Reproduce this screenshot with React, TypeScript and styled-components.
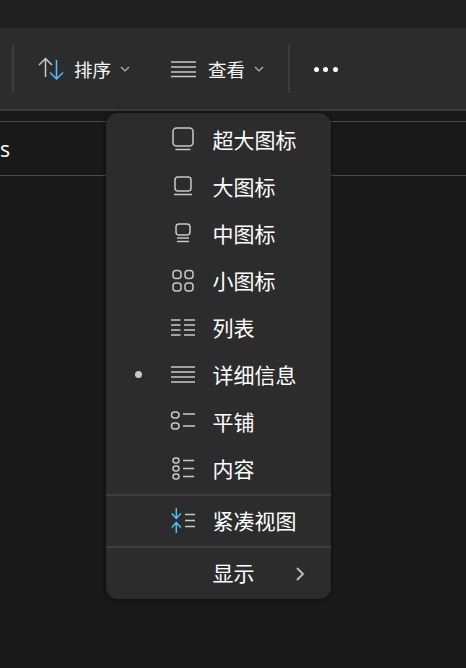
import { ReactNode } from "react";
import styled, { createGlobalStyle } from "styled-components";

const Global = createGlobalStyle`
  html, body {
    margin: 0;
    padding: 0;
    background: #191919;
  }
  body {
    font-family: "Noto Sans CJK SC", "Noto Sans", sans-serif;
    color: #fff;
    overflow: hidden;
  }
`;

const Page = styled.div`
  position: relative;
  width: 466px;
  height: 668px;
  background: #191919;
  overflow: hidden;
`;

const TitleStrip = styled.div`
  height: 28px;
  background: #202020;
`;

const Toolbar = styled.div`
  height: 81px;
  display: flex;
  align-items: center;
  background: #2c2c2c;
  border-bottom: 2px solid #3b3b3b;
  padding-left: 12px;
`;

const Separator = styled.div`
  width: 2px;
  height: 48px;
  background: #3d3d3d;
`;

const ToolButton = styled.div<{ $width: number }>`
  width: ${(p) => p.$width}px;
  height: 48px;
  display: flex;
  align-items: center;
  font-size: 18.5px;
  color: #f5f5f5;
`;

const ToolIcon = styled.span<{ $left: number; $right: number }>`
  display: flex;
  margin-left: ${(p) => p.$left}px;
  margin-right: ${(p) => p.$right}px;
`;

const Caret = styled.span`
  display: flex;
  margin-left: 9px;
`;

const Dots = styled.div`
  display: flex;
  gap: 4.3px;
  margin-left: 24px;
  margin-top: 2px;
`;

const Dot = styled.span`
  width: 5px;
  height: 5px;
  border-radius: 50%;
  background: #fff;
`;

const HeaderRow = styled.div`
  margin-top: 10px;
  height: 53px;
  border-top: 1px solid #4a4a4a;
  border-bottom: 1px solid #4a4a4a;
  display: flex;
  align-items: center;
  font-family: "Open Sans", sans-serif;
  font-size: 21px;
  font-weight: 500;
  color: #fff;
`;

const Menu = styled.div`
  position: absolute;
  left: 106px;
  top: 113px;
  width: 225px;
  height: 486px;
  box-sizing: border-box;
  padding-top: 4px;
  background: #2c2c2c;
  border-radius: 12px;
  box-shadow: 0 0 4px rgba(0, 0, 0, 0.6);
`;

const MenuRow = styled.div`
  height: 47px;
  display: grid;
  grid-template-columns: 64px 40px 1fr 32px;
  align-items: center;
  font-size: 21px;
  line-height: 1;
  color: #fff;
`;

const MenuDivider = styled.div`
  height: 2px;
  background: #3d3d3d;
  margin-top: 1px;
  margin-bottom: 2px;
`;

const Bullet = styled.span`
  width: 7px;
  height: 7px;
  border-radius: 50%;
  background: #c9c9c9;
  justify-self: center;
  margin-bottom: 2px;
`;

const IconSlot = styled.span`
  display: flex;
  justify-content: center;
  margin-left: -7px;
  margin-right: 7px;
  margin-bottom: 2px;
`;

const Label = styled.span`
  margin-left: 2.5px;
  padding-bottom: 2px;
`;

const Chevron = styled.span`
  display: flex;
  margin-left: -5px;
`;

const Ico = ({ children, size = 26, stroke = "#c8c8c8", width = 1.5 }: { children: ReactNode; size?: number; stroke?: string; width?: number }) => (
  <svg width={size} height={size} viewBox="0 0 26 26" fill="none" stroke={stroke} strokeWidth={width}>
    {children}
  </svg>
);

const lines = (x1: number, x2: number, ys: number[], key: string) =>
  ys.map((y) => <line key={key + y} x1={x1} x2={x2} y1={y} y2={y} />);

const rows: { label: string; icon: ReactNode; active?: boolean }[] = [
  {
    label: "超大图标",
    icon: (
      <Ico>
        <rect x="3" y="1" width="20" height="18" rx="3.5" />
        <line x1="5.5" x2="20.5" y1="22.5" y2="22.5" />
      </Ico>
    ),
  },
  {
    label: "大图标",
    icon: (
      <Ico>
        <rect x="5" y="3" width="16" height="14" rx="3" />
        <line x1="4" x2="22" y1="20.5" y2="20.5" />
      </Ico>
    ),
  },
  {
    label: "中图标",
    icon: (
      <Ico>
        <rect x="6" y="3" width="14" height="11" rx="3" />
        {lines(7, 19, [17, 20.5], "m")}
      </Ico>
    ),
  },
  {
    label: "小图标",
    icon: (
      <Ico>
        <rect x="3" y="2.5" width="8" height="8" rx="3" />
        <rect x="15" y="2.5" width="8" height="8" rx="3" />
        <rect x="3" y="15" width="8" height="8" rx="3" />
        <rect x="15" y="15" width="8" height="8" rx="3" />
      </Ico>
    ),
  },
  {
    label: "列表",
    icon: <Ico>{[...lines(1, 10.5, [5, 10, 15, 20], "a"), ...lines(14, 25, [5, 10, 15, 20], "b")]}</Ico>,
  },
  {
    label: "详细信息",
    active: true,
    icon: <Ico>{lines(1, 25, [5, 10, 15, 20], "d")}</Ico>,
  },
  {
    label: "平铺",
    icon: (
      <Ico>
        <rect x="1.5" y="3" width="7.5" height="6" rx="3" />
        <rect x="1.5" y="14" width="7.5" height="6" rx="3" />
        {lines(13, 25, [5, 17], "t")}
      </Ico>
    ),
  },
  {
    label: "内容",
    icon: (
      <Ico>
        <rect x="3" y="2" width="6" height="5" rx="2.5" />
        <rect x="3" y="10" width="6" height="5" rx="2.5" />
        <rect x="3" y="18" width="6" height="5" rx="2.5" />
        {lines(13, 24, [4.5, 12.5, 20.5], "c")}
      </Ico>
    ),
  },
];

const App = () => (
  <Page>
    <Global />
    <TitleStrip />
    <Toolbar>
      <Separator />
      <ToolButton $width={157}>
        <ToolIcon $left={24} $right={10}>
          <svg width="26" height="24" viewBox="0 0 26 24" fill="none" strokeWidth="1.5">
            <path d="M1 8 L7.5 1.5 L14 8 M7.5 1.5 V20" stroke="#c8c8c8" />
            <path d="M12 15.5 L18.5 22 L25 15.5 M18.5 22 V3" stroke="#4cc2ff" />
          </svg>
        </ToolIcon>
        排序
        <Caret>
          <svg width="10" height="8" viewBox="0 0 10 8" fill="none" stroke="#b5b5b5" strokeWidth="1.2">
            <path d="M1 2 L5 6 L9 2" />
          </svg>
        </Caret>
      </ToolButton>
      <ToolButton $width={117}>
        <ToolIcon $left={0} $right={12}>
          <svg width="25" height="18" viewBox="0 0 25 18" fill="none" stroke="#c8c8c8" strokeWidth="1.5">
            {lines(0, 25, [2, 7, 12, 16.5], "v")}
          </svg>
        </ToolIcon>
        查看
        <Caret>
          <svg width="10" height="8" viewBox="0 0 10 8" fill="none" stroke="#b5b5b5" strokeWidth="1.2">
            <path d="M1 2 L5 6 L9 2" />
          </svg>
        </Caret>
      </ToolButton>
      <Separator />
      <Dots>
        <Dot />
        <Dot />
        <Dot />
      </Dots>
    </Toolbar>
    <HeaderRow>
      <span>s</span>
    </HeaderRow>
    <Menu>
      {rows.map((r) => (
        <MenuRow key={r.label}>
          {r.active ? <Bullet /> : <span />}
          <IconSlot>{r.icon}</IconSlot>
          <Label>{r.label}</Label>
        </MenuRow>
      ))}
      <MenuDivider />
      <MenuRow>
        <span />
        <IconSlot>
          <Ico>
            <path d="M6.3 0 V10 M1.8 5.5 L6.3 10.5 L10.8 5.5 M6.3 25 V15 M1.8 19.5 L6.3 14.5 L10.8 19.5" stroke="#4cc2ff" />
            {lines(15, 25, [6.5, 12.5, 18.5], "k")}
          </Ico>
        </IconSlot>
        <Label>紧凑视图</Label>
      </MenuRow>
      <MenuDivider />
      <MenuRow>
        <span />
        <span />
        <Label>显示</Label>
        <Chevron>
          <svg width="12" height="16" viewBox="0 0 12 16" fill="none" stroke="#c0c0c0" strokeWidth="1.8">
            <path d="M3 2 L9 8 L3 14" />
          </svg>
        </Chevron>
      </MenuRow>
    </Menu>
  </Page>
);

export default App;
